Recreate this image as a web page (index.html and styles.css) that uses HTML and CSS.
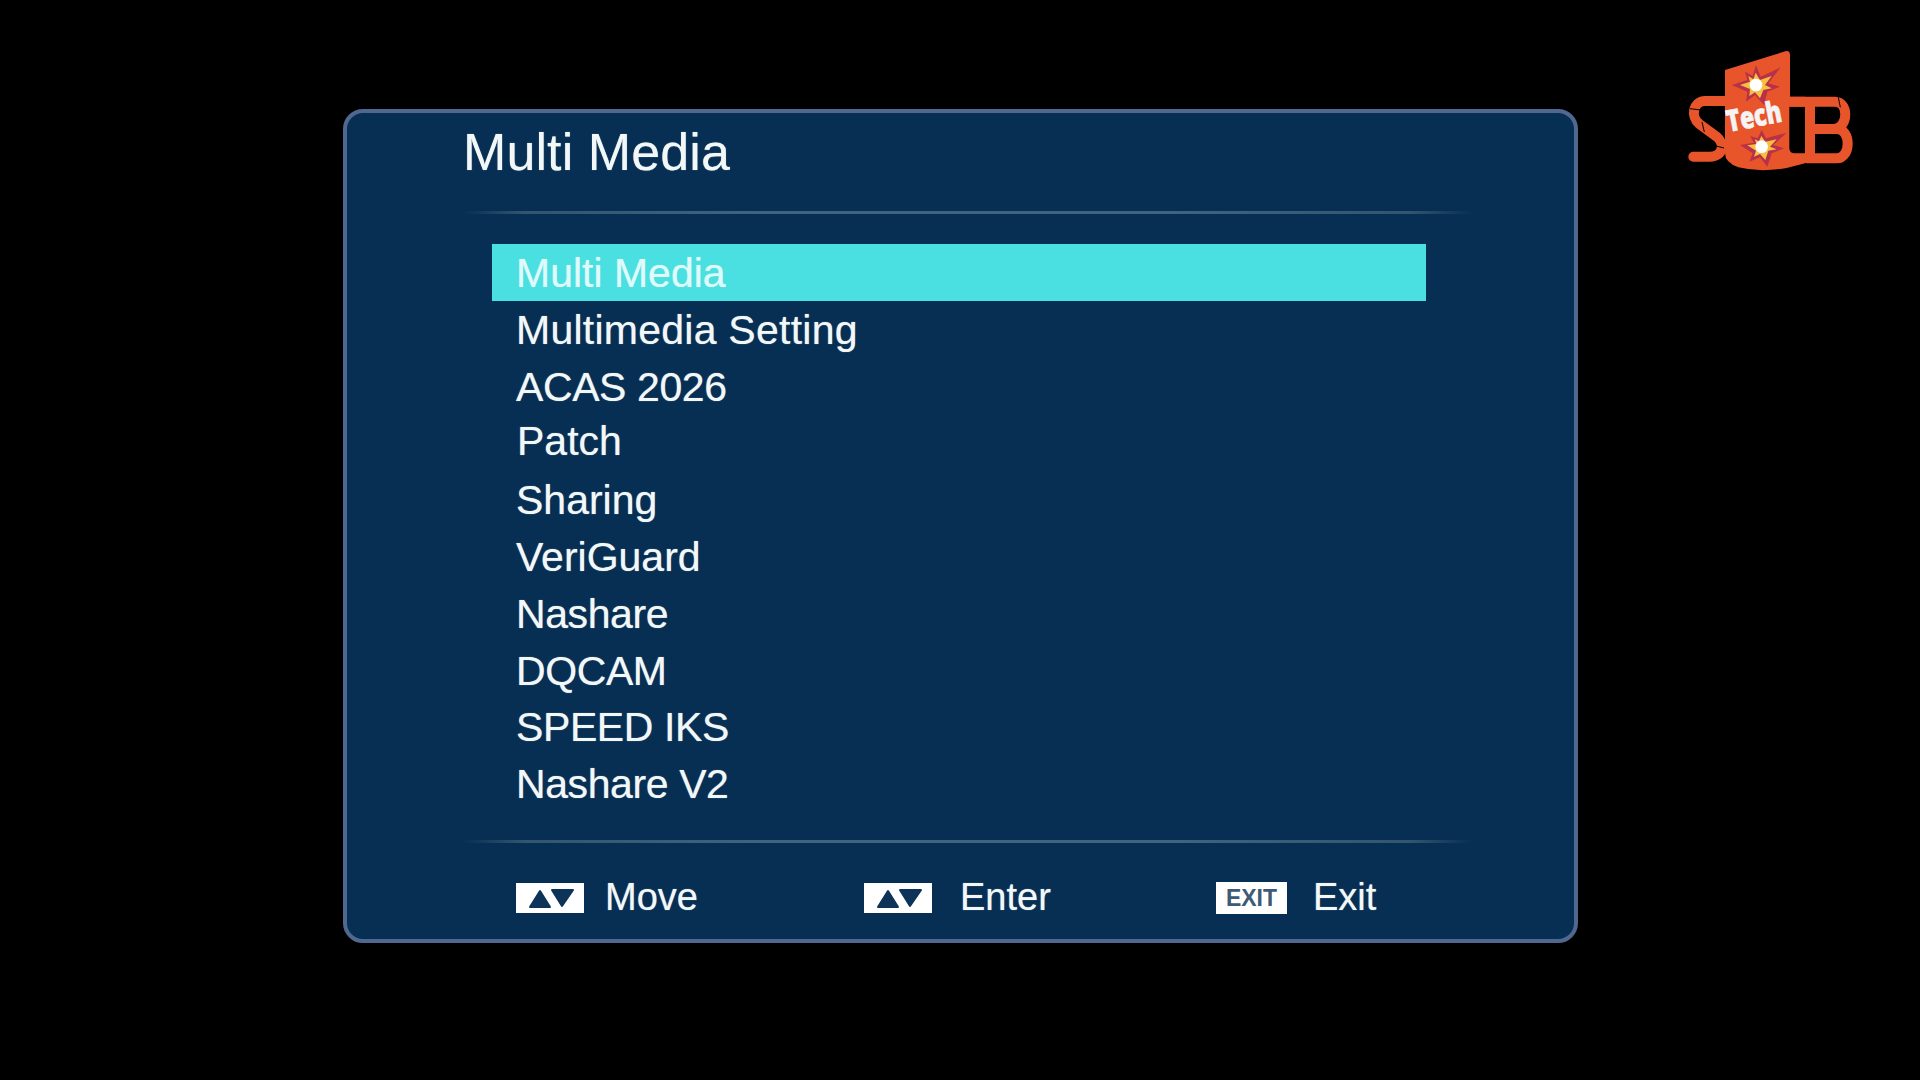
FILE: index.html
```html
<!DOCTYPE html>
<html lang="en">
<head>
    <meta charset="UTF-8">
    <title>Multi Media</title>
    <link rel="stylesheet" href="styles.css">
</head>
<body>
    <div class="panel">
        <h1 class="panel-title">Multi Media</h1>
        <div class="divider"></div>

        <ul class="menu">
            <li class="menu-item active">Multi Media</li>
            <li class="menu-item wide">Multimedia Setting</li>
            <li class="menu-item narrow">ACAS 2026</li>
            <li class="menu-item patch">Patch</li>
            <li class="menu-item">Sharing</li>
            <li class="menu-item">VeriGuard</li>
            <li class="menu-item narrow">Nashare</li>
            <li class="menu-item narrow">DQCAM</li>
            <li class="menu-item narrow">SPEED IKS</li>
            <li class="menu-item narrow">Nashare V2</li>
        </ul>

        <div class="divider"></div>

        <div class="hints">
            <div class="hint hint-move">
                <svg class="key" viewBox="0 0 68 30"><path class="key-arrows" d="M14 24 24 8 34 24Z M36 7H57L46 23Z"/></svg>
                <span>Move</span>
            </div>
            <div class="hint hint-enter">
                <svg class="key" viewBox="0 0 68 30"><path class="key-arrows" d="M14 24 24 8 34 24Z M36 7H57L46 23Z"/></svg>
                <span>Enter</span>
            </div>
            <div class="hint hint-exit">
                <span class="key-exit">EXIT</span>
                <span>Exit</span>
            </div>
        </div>
    </div>

    <!-- channel logo -->
    <div class="logo">
        <svg viewBox="0 0 630 450" width="210" height="150">
            <path class="logo-stroke" d="M195 213H135C100 213 90 260 118 282L170 320C195 340 190 380 150 380H100"/>
            <path class="logo-notch" d="M90 236 122 240M126 276 133 306M168 348 192 354"/>
            <path class="logo-stroke" d="M392 215H525C566 215 566 290 525 297H450M450 215V385M450 297H530C574 297 574 385 530 385H440"/>
            <path class="logo-notch" d="M535 202 541 232"/>
            <path d="M195 120 376 64Q390 60 390 76V200H435V400L380 414Q300 428 235 412Q195 398 195 370Z M388 230H435V370H404Q388 370 388 354Z" fill="#e8552a" fill-rule="evenodd"/>
            <path d="M288 105 302 140 362 112 325 160 360 170 322 185 312 225 285 195 258 215 262 185 215 165 262 150 255 125 278 138Z" fill="#b8304a"/>
            <path d="M287 128 300 150 335 138 315 165 335 175 310 180 300 205 285 187 268 198 270 177 240 165 270 155 265 138 280 148Z" fill="#f8c040"/>
            <circle cx="288" cy="165" r="19" fill="#fff"/>
            <path d="M305 300 318 325 380 308 340 345 372 355 335 370 322 410 300 382 268 395 278 370 240 345 282 338 270 318 293 325Z" fill="#b8304a"/>
            <path d="M304 318 316 335 350 328 330 350 350 358 325 362 316 390 300 372 282 380 288 362 262 346 290 342 284 328 297 334Z" fill="#f8c040"/>
            <circle cx="305" cy="350" r="19" fill="#fff"/>
            <text class="logo-text" x="206" y="306" textLength="166" lengthAdjust="spacingAndGlyphs" transform="rotate(-11 206 306)">Tech</text>
        </svg>
    </div>
</body>
</html>
```

FILE: styles.css
```css
* {
    margin: 0;
    padding: 0;
    box-sizing: border-box;
}

body {
    width: 1920px;
    height: 1080px;
    background: #000;
    font-family: "Liberation Sans", Arial, sans-serif;
    color: #f2f8f8;
    padding: 109px 0 0 343px;
    overflow: hidden;
}

.panel {
    width: 1235px;
    height: 834px;
    background: #072f53;
    border: 4px solid #50688f;
    border-radius: 20px;
    padding: 0 102px 0 116px;
    text-shadow: 0 0 1px rgba(255, 255, 255, 0.6);
}

.panel-title {
    font-size: 52px;
    font-weight: 400;
    line-height: 60px;
    margin-top: 9px;
    height: 89px;
    letter-spacing: 0.1px;
}

.divider {
    height: 3px;
    background: linear-gradient(90deg, #072f53 0%, #32566f 6%, #3e6480 30%, #3e6480 70%, #32566f 94%, #072f53 100%);
}

.menu {
    list-style: none;
    margin: 30px 0 28px 29px;
}

.menu-item {
    width: 934px;
    height: 56.8px;
    line-height: 58px;
    font-size: 41px;
    padding-left: 24px;
}

.menu-item.active {
    background: #4adfe0;
    color: #dffafa;
}

.menu-item.wide {
    letter-spacing: 0.25px;
}

.menu-item.narrow {
    letter-spacing: -0.4px;
}

.menu-item.patch {
    line-height: 54px;
    padding-left: 25px;
}

.hints {
    display: flex;
    margin-top: 39px;
    font-size: 38px;
}

.hint {
    display: flex;
    align-items: center;
    height: 32px;
}

.hint-move {
    margin-left: 53px;
    width: 348px;
}

.hint-enter {
    width: 352px;
}

.key {
    width: 68px;
    height: 30px;
    background: #fff;
    margin-right: 21px;
}

.key-arrows {
    fill: #0d3358;
    stroke: #0d3358;
    stroke-width: 2;
    stroke-linejoin: round;
}

.hint-enter .key {
    margin-right: 28px;
}

.key-exit {
    width: 71px;
    height: 32px;
    background: #fff;
    color: #3f5a76;
    font-size: 23px;
    font-weight: 700;
    line-height: 32px;
    text-align: center;
    margin-right: 26px;
    text-shadow: none;
}

.logo {
    position: absolute;
    left: 1660px;
    top: 30px;
    width: 210px;
    height: 150px;
}

.logo-stroke {
    fill: none;
    stroke: #e8552a;
    stroke-width: 30;
    stroke-linecap: round;
}

.logo-notch {
    fill: none;
    stroke: #000;
    stroke-width: 3;
}

.logo-text {
    font-family: "Open Sans", sans-serif;
    font-size: 90px;
    font-weight: 800;
    fill: #f4f4f4;
    stroke: #f4f4f4;
    stroke-width: 2;
}
```
